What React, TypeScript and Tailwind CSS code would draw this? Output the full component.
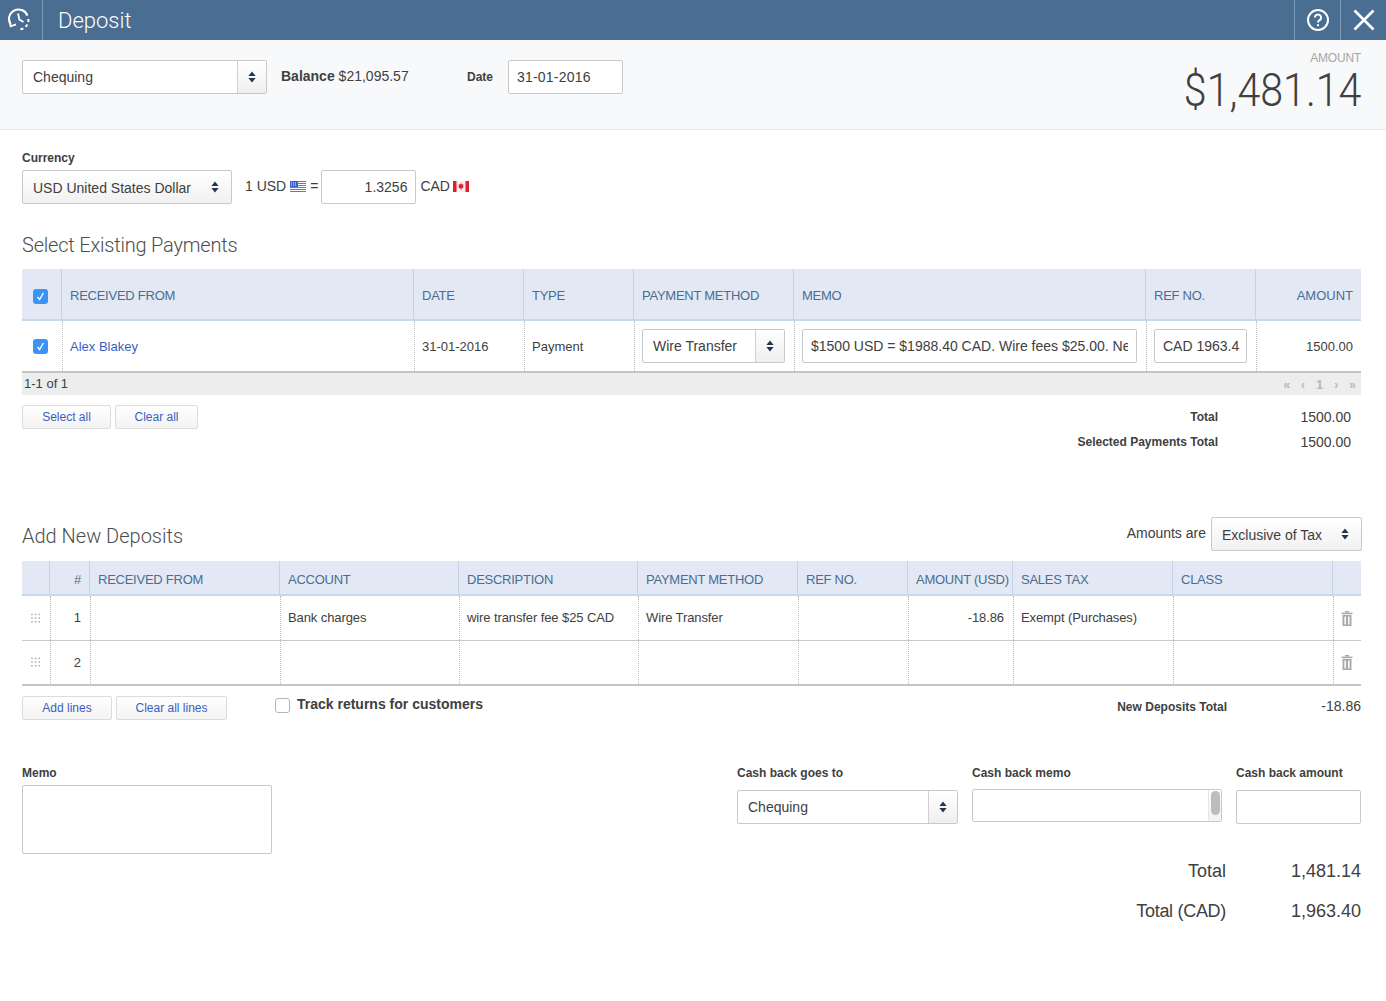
import React from "react";

function Updown() {
  return (
    <svg width="8" height="12" viewBox="0 0 8 12" className="shrink-0">
      <path d="M4 0.5 L7.6 5 H0.4 Z" fill="#26344d" />
      <path d="M4 11.5 L7.6 7 H0.4 Z" fill="#26344d" />
    </svg>
  );
}

function SplitSelect({ label, w }: { label: string; w: string }) {
  return (
    <div className={`${w} h-[34px] shrink-0 flex border border-[#c9c9c9] rounded-[2px] bg-white`}>
      <div className="flex-1 pl-[10px] flex items-center text-[14px] text-[#404040] whitespace-nowrap">{label}</div>
      <div className="w-[29px] border-l border-[#d0d0d0] bg-gradient-to-b from-white to-[#efefef] flex items-center justify-center">
        <Updown />
      </div>
    </div>
  );
}

function GraySelect({ label, w }: { label: string; w: string }) {
  return (
    <div className={`${w} h-[34px] shrink-0 flex items-center justify-between pl-[10px] pr-[12px] border border-[#c9c9c9] rounded-[2px] bg-gradient-to-b from-white to-[#f1f1f1] text-[14px] text-[#404040] whitespace-nowrap`}>
      <span className="pt-[2px]">{label}</span>
      <Updown />
    </div>
  );
}

function Check() {
  return (
    <div className="w-[15px] h-[15px] rounded-[3px] bg-[#3b94f5] flex items-center justify-center">
      <svg width="11" height="11" viewBox="0 0 11 11">
        <path d="M2.6 6 L4.6 8.6 L8.4 2" fill="none" stroke="#fff" strokeWidth="1.4" />
      </svg>
    </div>
  );
}

function LinkButton({ label, w }: { label: string; w: string }) {
  return (
    <div className={`${w} h-6 flex items-center justify-center border border-[#dcdcdc] rounded-[2px] bg-gradient-to-b from-white to-[#f3f3f3] text-[12px] text-[#3a5fc0]`}>
      {label}
    </div>
  );
}

function HeadCell({ children, right, noBorder }: { children?: React.ReactNode; right?: boolean; noBorder?: boolean }) {
  return (
    <div className={`px-2 pt-1 flex items-center text-[13px] tracking-[-0.25px] text-[#4a6d92] whitespace-nowrap ${right ? "justify-end" : ""} ${noBorder ? "" : "border-r border-[#c3d2e4]"}`}>
      {children}
    </div>
  );
}

function Cell({ children, right, noBorder }: { children?: React.ReactNode; right?: boolean; noBorder?: boolean }) {
  return (
    <div className={`pl-[7px] flex items-center text-[13px] text-[#404040] whitespace-nowrap overflow-hidden ${right ? "justify-end" : ""} ${noBorder ? "pr-2" : "pr-[9px] border-r border-dotted border-[#bcbcbc]"}`}>
      {children}
    </div>
  );
}

function CellText({ children }: { children?: React.ReactNode }) {
  return <span className="pt-[2px]">{children}</span>;
}

function Grip() {
  return (
    <svg width="11" height="11" viewBox="0 0 11 11" fill="#a8a8a8" className="ml-[2px]">
      {[1, 5, 9].map((y) =>
        [1, 5, 9].map((x) => <rect key={`${x}-${y}`} x={x - 0.75} y={y - 0.75} width="1.6" height="1.6" />)
      )}
    </svg>
  );
}

function Trash() {
  return (
    <svg width="12" height="15" viewBox="0 0 12 15" fill="#a9a9a9">
      <rect x="4" y="0" width="4" height="1.4" />
      <rect x="0.5" y="1.6" width="11" height="1.6" />
      <path d="M1.5 4 H10.5 V15 H1.5 Z M3.4 5.5 V13.5 H4.9 V5.5 Z M7.1 5.5 V13.5 H8.6 V5.5 Z" fillRule="evenodd" />
    </svg>
  );
}

function UsFlag() {
  return (
    <svg width="16" height="11" viewBox="0 0 16 11" className="inline-block">
      <rect width="16" height="11" fill="#fff" />
      {[0, 2, 4, 6, 8, 10].map((y) => (
        <rect key={y} y={y} width="16" height="1" fill="#e0503f" />
      ))}
      <rect width="8" height="6" fill="#3a63d8" />
      {[1, 3, 5].map((x) => [1.5, 3.5].map((y) => <rect key={`${x}${y}`} x={x} y={y} width="1" height="1" fill="#dfe7ff" />))}
    </svg>
  );
}

function CaFlag() {
  return (
    <svg width="16" height="11" viewBox="0 0 16 11" className="inline-block">
      <rect width="16" height="11" fill="#f6eeee" />
      <rect width="3.5" height="11" fill="#e2202c" />
      <rect x="12.5" width="3.5" height="11" fill="#e2202c" />
      <path d="M8 2 L9 3.6 L10.4 3.2 L10 5.4 L11 5.8 L9 7.4 L8.3 7.4 V9 H7.7 V7.4 L7 7.4 L5 5.8 L6 5.4 L5.6 3.2 L7 3.6 Z" fill="#e2202c" />
    </svg>
  );
}

const existingHead = "grid-cols-[40px_352px_110px_110px_160px_352px_110px_105px]";
const existingRow = "grid-cols-[41px_352px_110px_110px_160px_352px_110px_104px]";
const depositHead = "grid-cols-[28px_40px_190px_179px_179px_160px_110px_105px_160px_160px_28px]";
const depositRow = "grid-cols-[29px_40px_190px_179px_179px_160px_110px_105px_160px_160px_27px]";

function DepositRow({ n, cells, last }: { n: number; cells: string[]; last?: boolean }) {
  return (
    <div className={`grid ${depositRow} h-[45px] tracking-[-0.1px] ${last ? "border-b-2 border-[#c4c4c4]" : "border-b border-[#c9c9c9]"}`}>
      <Cell><Grip /></Cell>
      <Cell right>{n}</Cell>
      <Cell />
      <Cell>{cells[0]}</Cell>
      <Cell>{cells[1]}</Cell>
      <Cell>{cells[2]}</Cell>
      <Cell />
      <Cell right>{cells[3]}</Cell>
      <Cell>{cells[4]}</Cell>
      <Cell />
      <Cell noBorder>
        <Trash />
      </Cell>
    </div>
  );
}

export default function App() {
  return (
    <div className="w-[1386px] h-[1001px] overflow-hidden bg-white text-[#404040] font-['Liberation_Sans',Arial,sans-serif]">
      {/* Title bar */}
      <div className="h-10 bg-[#4a6d92] flex text-white">
        <div className="w-[43px] border-r border-[#7f9ab6] flex items-center justify-center pr-[5px]">
          <svg width="24" height="24" viewBox="0 0 24 24" fill="none" stroke="#fff" strokeWidth="2">
            <path d="M3.8 16.5 A9.5 9.5 0 1 1 20.4 7.6" />
            <path d="M21.4 11 A9.5 9.5 0 0 1 11 21.4" strokeDasharray="3 2.6" />
            <path d="M2.4 12.5 L3.6 18.4 L9 16.4" strokeWidth="1.8" />
            <path d="M11 5.5 L12.4 11.6 L16.5 14" strokeWidth="1.8" />
          </svg>
        </div>
        <div className="flex-1 pl-[15px] flex items-center text-[22px] font-light font-['Roboto',sans-serif]">Deposit</div>
        <div className="w-[46px] border-l border-[#7f9ab6] flex items-center justify-center">
          <svg width="24" height="24" viewBox="0 0 24 24" fill="none" stroke="#fff" strokeWidth="2">
            <circle cx="12" cy="12" r="10" />
            <path d="M8.9 9.6 A3.1 3.1 0 1 1 13.6 12.2 C12.4 12.9 12 13.4 12 14.6" />
            <rect x="11" y="16.2" width="2" height="2" fill="#fff" stroke="none" />
          </svg>
        </div>
        <div className="w-[46px] border-l border-[#7f9ab6] flex items-center justify-center">
          <svg width="22" height="22" viewBox="0 0 22 22" stroke="#fff" strokeWidth="2.6">
            <path d="M1.5 1.5 L20.5 20.5 M20.5 1.5 L1.5 20.5" />
          </svg>
        </div>
      </div>

      {/* Account strip */}
      <div className="h-[90px] bg-[#f8f9fb] border-b border-[#e4e8ee] pl-[22px] pr-[25px] flex items-start">
        <div className="mt-5 flex items-start">
          <SplitSelect label="Chequing" w="w-[245px]" />
          <div className="ml-[14px] mt-[6px] text-[14px] whitespace-nowrap w-[186px]">
            <span className="font-bold">Balance</span> $21,095.57
          </div>
          <div className="mt-[8px] text-[12px] font-bold w-[41px]">Date</div>
          <div className="w-[115px] h-[34px] border border-[#c9c9c9] rounded-[2px] bg-white flex items-center pl-2 text-[14px] tracking-[0.2px]">31-01-2016</div>
        </div>
        <div className="ml-auto flex flex-col items-end">
          <div className="mt-[11px] text-[12px] text-[#a5a5a5] leading-[14px] tracking-[-0.2px]">AMOUNT</div>
          <div className="-mt-[1px] text-[46px] leading-[52px] font-light font-['Roboto',sans-serif] text-[#404040] scale-x-[0.895] origin-right">$1,481.14</div>
        </div>
      </div>

      <div className="pl-[22px] pr-[25px]">
        {/* Currency */}
        <div className="mt-[21px] text-[12px] font-bold leading-[14px]">Currency</div>
        <div className="mt-[5px] flex items-center text-[14px]">
          <GraySelect label="USD United States Dollar" w="w-[210px]" />
          <div className="ml-[13px] flex items-center gap-1 -mt-[2px] whitespace-nowrap">
            1 USD <UsFlag /> =
          </div>
          <div className="ml-[3px] w-[95px] h-[34px] border border-[#c9c9c9] rounded-[2px] flex items-center justify-end pr-2">1.3256</div>
          <div className="ml-1 flex items-center gap-[3px] -mt-[2px] whitespace-nowrap">
            CAD <CaFlag />
          </div>
        </div>

        {/* Existing payments */}
        <h2 className="mt-[29px] text-[20px] leading-[24px] text-[#4d4d4d] font-['Roboto',sans-serif] font-light tracking-[-0.2px]">Select Existing Payments</h2>
        <div className="mt-3 text-[13px]">
          <div className={`grid ${existingHead} h-[52px] bg-[#e2e9f4] border-b-2 border-[#c8d8e9]`}>
            <HeadCell><div className="pl-[3px]"><Check /></div></HeadCell>
            <HeadCell>RECEIVED FROM</HeadCell>
            <HeadCell>DATE</HeadCell>
            <HeadCell>TYPE</HeadCell>
            <HeadCell>PAYMENT METHOD</HeadCell>
            <HeadCell>MEMO</HeadCell>
            <HeadCell>REF NO.</HeadCell>
            <HeadCell right noBorder><span className="tracking-normal">AMOUNT</span></HeadCell>
          </div>
          <div className={`grid ${existingRow} h-[52px] border-b-2 border-[#c4c4c4]`}>
            <Cell><div className="pl-[4px]"><Check /></div></Cell>
            <Cell><CellText><span className="text-[#3a5fc0]">Alex Blakey</span></CellText></Cell>
            <Cell><CellText>31-01-2016</CellText></Cell>
            <Cell><CellText>Payment</CellText></Cell>
            <Cell><SplitSelect label="Wire Transfer" w="w-[143px]" /></Cell>
            <Cell>
              <div className="w-full h-[34px] border border-[#c9c9c9] rounded-[2px] flex items-center pl-2 pr-2 text-[14px] overflow-hidden">
                <span className="block overflow-hidden">$1500 USD = $1988.40 CAD. Wire fees $25.00. Net</span>
              </div>
            </Cell>
            <Cell>
              <div className="w-full h-[34px] border border-[#c9c9c9] rounded-[2px] flex items-center pl-2 text-[14px] overflow-hidden">CAD 1963.4</div>
            </Cell>
            <Cell right noBorder><CellText>1500.00</CellText></Cell>
          </div>
          <div className="h-[22px] bg-[#ededed] flex items-center justify-between pl-[2px] pr-[5px] text-[13px]">
            <span className="-mt-[1px]">1-1 of 1</span>
            <span className="flex items-center gap-[11px] text-[#b8b8b8] font-bold text-[12px] pt-[1px]">
              <span>«</span><span>‹</span><span className="text-[13px]">1</span><span>›</span><span>»</span>
            </span>
          </div>
        </div>

        <div className="mt-[10px] flex items-start justify-between">
          <div className="flex gap-1">
            <LinkButton label="Select all" w="w-[89px]" />
            <LinkButton label="Clear all" w="w-[83px]" />
          </div>
          <div className="pr-[10px] -mt-[1px]">
            <div className="flex items-center h-[26px] justify-end">
              <span className="text-[12px] font-bold">Total</span>
              <span className="w-[133px] text-right text-[14px]">1500.00</span>
            </div>
            <div className="flex items-center h-[26px] justify-end -mt-[1px]">
              <span className="text-[12px] font-bold">Selected Payments Total</span>
              <span className="w-[133px] text-right text-[14px]">1500.00</span>
            </div>
          </div>
        </div>

        {/* New deposits */}
        <div className="mt-[62px] flex items-end justify-between">
          <h2 className="text-[20px] leading-[24px] mb-[3px] text-[#4d4d4d] font-['Roboto',sans-serif] font-light">Add New Deposits</h2>
          <div className="flex items-start -mr-[1px]">
            <span className="text-[14px] mr-[5px] mt-[6px]">Amounts are</span>
            <GraySelect label="Exclusive of Tax" w="w-[151px]" />
          </div>
        </div>
        <div className="mt-[10px]">
          <div className={`grid ${depositHead} h-[35px] bg-[#e2e9f4] border-b-2 border-[#c8d8e9]`}>
            <HeadCell />
            <HeadCell right>#</HeadCell>
            <HeadCell>RECEIVED FROM</HeadCell>
            <HeadCell>ACCOUNT</HeadCell>
            <HeadCell>DESCRIPTION</HeadCell>
            <HeadCell>PAYMENT METHOD</HeadCell>
            <HeadCell>REF NO.</HeadCell>
            <HeadCell>AMOUNT (USD)</HeadCell>
            <HeadCell>SALES TAX</HeadCell>
            <HeadCell>CLASS</HeadCell>
            <HeadCell noBorder />
          </div>
          <DepositRow n={1} cells={["Bank charges", "wire transfer fee $25 CAD", "Wire Transfer", "-18.86", "Exempt (Purchases)"]} />
          <DepositRow n={2} cells={["", "", "", "", ""]} last />
        </div>

        <div className="mt-[10px] flex items-start">
          <div className="flex gap-1">
            <LinkButton label="Add lines" w="w-[90px]" />
            <LinkButton label="Clear all lines" w="w-[111px]" />
          </div>
          <div className="ml-[48px] -mt-[1px] flex items-center gap-[7px]">
            <div className="w-[15px] h-[15px] mt-[2px] border border-[#b5b5b5] rounded-[3px] bg-white" />
            <span className="text-[14px] font-bold leading-[18px]">Track returns for customers</span>
          </div>
          <div className="ml-auto flex items-center">
            <span className="text-[12px] font-bold">New Deposits Total</span>
            <span className="w-[134px] text-right text-[14px]">-18.86</span>
          </div>
        </div>

        {/* Memo and cash back */}
        <div className="mt-[46px] flex items-start">
          <div className="w-[715px]">
            <div className="text-[12px] font-bold leading-[14px]">Memo</div>
            <div className="mt-[5px] w-[250px] h-[69px] border border-[#c9c9c9] rounded-[2px]" />
          </div>
          <div className="w-[235px]">
            <div className="text-[12px] font-bold leading-[14px]">Cash back goes to</div>
            <div className="mt-[10px]"><SplitSelect label="Chequing" w="w-[221px]" /></div>
          </div>
          <div className="w-[264px]">
            <div className="text-[12px] font-bold leading-[14px]">Cash back memo</div>
            <div className="mt-[9px] w-[250px] h-[33px] border border-[#c9c9c9] rounded-[2px] flex justify-end">
              <div className="w-[13px] border-l border-[#e6e6e6] bg-gradient-to-b from-white to-[#f2f2f2] flex justify-center pt-[1px]">
                <div className="w-[9px] h-[24px] rounded-[5px] bg-[#bdbdbd]" />
              </div>
            </div>
          </div>
          <div className="w-[125px]">
            <div className="text-[12px] font-bold leading-[14px]">Cash back amount</div>
            <div className="mt-[10px] w-[125px] h-[34px] border border-[#c9c9c9] rounded-[2px]" />
          </div>
        </div>

        <div className="-mt-[3px] flex flex-col items-end text-[18px] leading-[40px] text-[#404040]">
          <div className="flex">
            <span>Total</span>
            <span className="w-[135px] text-right">1,481.14</span>
          </div>
          <div className="flex">
            <span className="tracking-[-0.3px]">Total (CAD)</span>
            <span className="w-[135px] text-right">1,963.40</span>
          </div>
        </div>
      </div>
    </div>
  );
}
